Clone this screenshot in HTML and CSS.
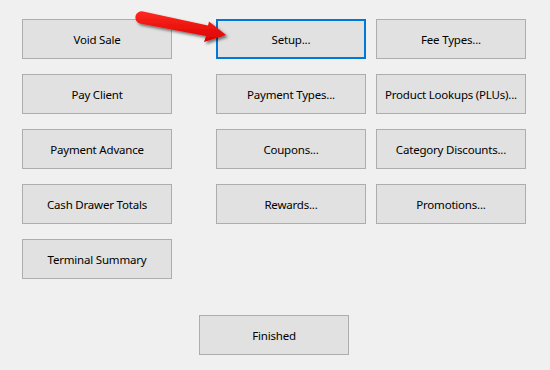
FILE: index.html
```html
<!DOCTYPE html>
<html lang="en">
<head>
  <meta charset="UTF-8" />
  <title>Terminal Menu</title>
  <link rel="stylesheet" href="styles.css">
</head>
<body>
  <div class="window">
    <div class="columns">
      <div class="column col-left">
        <button class="btn">Void Sale</button>
        <button class="btn">Pay Client</button>
        <button class="btn">Payment Advance</button>
        <button class="btn">Cash Drawer Totals</button>
        <button class="btn">Terminal Summary</button>
      </div>
      <div class="column col-mid">
        <button class="btn focused">Setup...</button>
        <button class="btn">Payment Types...</button>
        <button class="btn">Coupons...</button>
        <button class="btn">Rewards...</button>
      </div>
      <div class="column">
        <button class="btn">Fee Types...</button>
        <button class="btn">Product Lookups (PLUs)...</button>
        <button class="btn">Category Discounts...</button>
        <button class="btn">Promotions...</button>
      </div>
    </div>

    <div class="footer">
      <button class="btn">Finished</button>
    </div>

    <!-- callout arrow pointing at Setup -->
    <svg class="arrow" width="110" height="50" viewBox="130 5 110 50">
      <defs>
        <linearGradient id="red" x1="0" y1="0" x2="0" y2="1">
          <stop offset="0" stop-color="#ff2a1f"/>
          <stop offset="1" stop-color="#d90000"/>
        </linearGradient>
        <filter id="shadow" x="-20%" y="-40%" width="140%" height="180%">
          <feDropShadow dx="2" dy="2" stdDeviation="1.5" flood-color="#000" flood-opacity="0.55"/>
        </filter>
      </defs>
      <path d="M143,11.5 L208,25.5 L209,21.5 L226,35 L204,42 L206,36 L140,23.5 A6,6 0 0 1 143,11.5 Z"
            fill="url(#red)" filter="url(#shadow)"/>
    </svg>
  </div>
</body>
</html>
```

FILE: styles.css
```css
body {
  margin: 0;
  background-color: #f0f0f0;
  font-family: 'Noto Sans', 'Open Sans', sans-serif;
  font-size: 12px;
}

.window {
  position: relative;
  width: 550px;
  height: 370px;
  padding: 19px 0 0 22px;
  box-sizing: border-box;
}

.columns {
  display: flex;
}

.column {
  display: flex;
  flex-direction: column;
  gap: 15px;
}

.col-left {
  margin-right: 44px;
}

.col-mid {
  margin-right: 10px;
}

.btn {
  width: 150px;
  height: 40px;
  background-color: #e1e1e1;
  border: 1px solid #adadad;
  color: #000;
  font-family: inherit;
  font-size: 11.5px;
  letter-spacing: -0.2px;
  padding: 0;
  margin: 0;
  cursor: pointer;
}

.btn:hover {
  background-color: #e5f1fb;
  border-color: #0078d7;
}

.btn.focused {
  border: 2px solid #0078d7;
}

.footer {
  margin-top: 36px;
  padding-left: 177px;
}

.arrow {
  position: absolute;
  left: 130px;
  top: 5px;
  overflow: visible;
}
```
